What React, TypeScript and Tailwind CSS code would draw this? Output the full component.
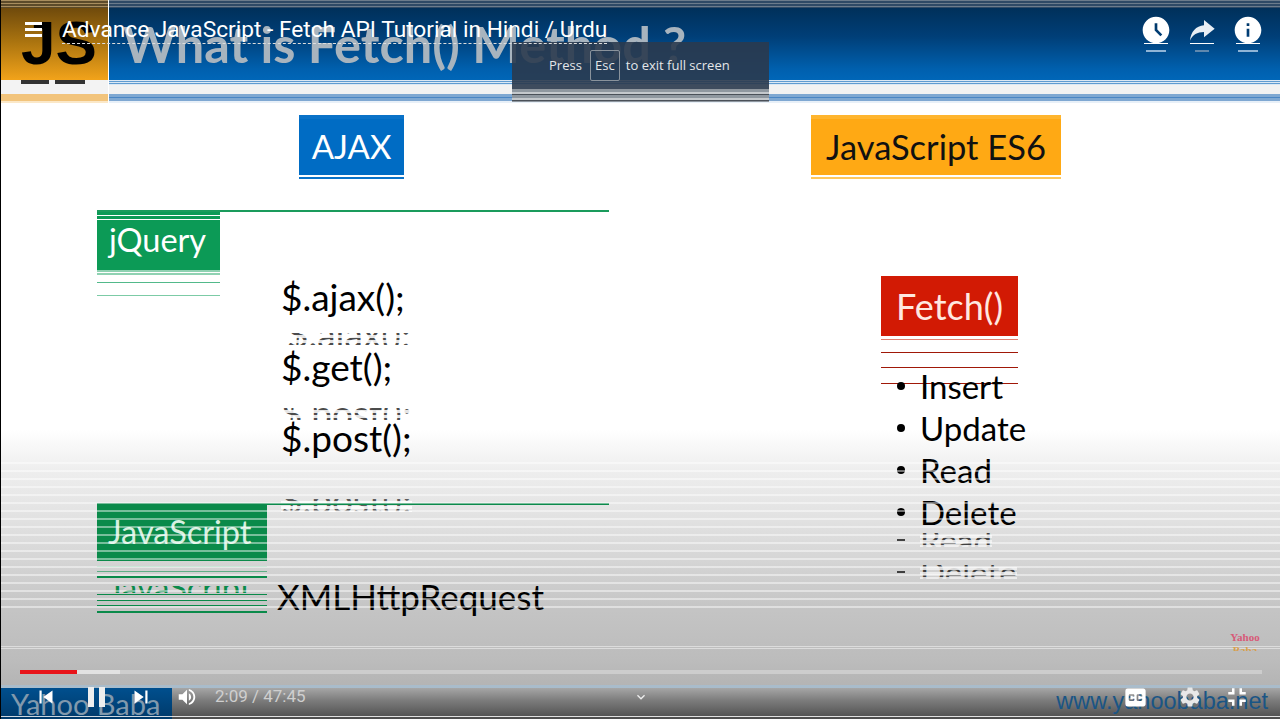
import React from "react";
import { MdAccessTimeFilled, MdInfo, MdSettings, MdFullscreenExit, MdSkipPrevious, MdSkipNext, MdVolumeUp, MdClosedCaption, MdKeyboardArrowDown } from "react-icons/md";

const slide = "font-['Lato','Open_Sans',sans-serif]";

function Slice({ text, h, top, className }: { text: string; h: number; top: number; className: string }) {
  return (
    <div className="relative overflow-hidden whitespace-nowrap" style={{ height: h }}>
      <div className={className} style={{ marginTop: -top }}>{text}</div>
      <div className="absolute inset-0 bg-[repeating-linear-gradient(to_bottom,transparent_0,transparent_2px,rgba(255,255,255,0.85)_2px,rgba(255,255,255,0.85)_5px)]" />
    </div>
  );
}

function TopIcon({ children, dash }: { children: React.ReactNode; dash: string }) {
  return (
    <div className="flex flex-col items-center w-[30px]">
      {children}
      <div className="w-[24px] h-px bg-white -mt-[3px]" />
      <div className={`h-[2px] mt-[6px] ${dash}`} />
    </div>
  );
}

const listText = "text-[37px] leading-[38px] text-black";

export default function App() {
  return (
    <div className="relative w-[1280px] h-[719px] overflow-hidden bg-[linear-gradient(to_bottom,#fff_0,#fff_430px,#eee_470px,#dcdcdc_540px,#c4c4c4_610px,#bcbcbc_660px,#b4b4b4_686px)] border-l border-black">
      {/* slide header band */}
      <div className="flex h-[103px]">
        <div className="w-[107px] flex flex-col shrink-0">
          <div className="h-[8px] bg-[repeating-linear-gradient(to_bottom,#a98d5e_0,#a98d5e_1px,#5c4a2a_1px,#5c4a2a_3px)]" />
          <div className="h-[72px] bg-[linear-gradient(to_bottom,#6f4a0c,#a8720f_45%,#f2a31a)] overflow-hidden">
            <div className="font-['Liberation_Sans',sans-serif] font-bold text-[62px] leading-[60px] text-black ml-[20px] mt-[5px]">JS</div>
          </div>
          <div className="h-[7px] bg-[#f3f3f3] overflow-hidden">
            <div className="flex gap-[6px] ml-[20px]"><div className="w-[28px] h-[4px] bg-[#333]" /><div className="w-[30px] h-[4px] bg-[#333]" /></div>
          </div>
          <div className="h-[7px] bg-[#f3f3f3]" />
          <div className="h-[7px] bg-[#f2c47c]" />
          <div className="h-[2px] bg-[#fbe8c8]" />
        </div>
        <div className="w-px bg-white shrink-0" />
        <div className="flex-1 flex flex-col">
          <div className="h-[8px] bg-[repeating-linear-gradient(to_bottom,#6b7c8c_0,#6b7c8c_1px,#2e4a66_1px,#2e4a66_3px)]" />
          <div className="h-[72px] bg-[linear-gradient(to_bottom,#00305a,#003f78_40%,#0060ae_85%,#0066b8)] overflow-hidden">
            <div className={`${slide} text-[50.5px] leading-[60px] font-bold text-[#a8b4be] whitespace-nowrap ml-[14px] mt-[6px]`}>What is Fetch() Method ?</div>
          </div>
          <div className="h-[5px] bg-[repeating-linear-gradient(to_bottom,#dbe8f4_0,#dbe8f4_1px,#5f9bd0_1px,#5f9bd0_2px)]" />
          <div className="h-[9px] bg-[#f2f2f2]" />
          <div className="h-[7px] bg-[repeating-linear-gradient(to_bottom,#7fa8d2_0,#7fa8d2_3px,#4a86c4_3px,#4a86c4_4px)]" />
          <div className="h-[2px] bg-[#e8f0f8]" />
        </div>
      </div>

      {/* slide body */}
      <div className={`${slide} flex mt-[12px]`}>
        <div className="w-[512px] ml-[96px] shrink-0">
          <div className="ml-[202px] w-[105px] h-[62px] bg-[#006cc4] flex items-center justify-center border-t-[4px] border-b-2 border-b-white border-t-[#0a72c8] text-white text-[33px] shadow-[0_2px_0_#0a72c8]">AJAX</div>

          <div className="mt-[33px] h-[293px] border-t-2 border-[#1a9b5c] flex">
            <div className="w-[123px] shrink-0">
              <div className="h-[58px] text-white text-[32.5px] leading-[34px] pt-[11px] pl-[12px] overflow-hidden bg-[linear-gradient(to_bottom,#0c9a56_0,#0c9a56_3px,#fff_3px,#fff_4px,#0c9a56_4px,#0c9a56_7px,#fff_7px,#fff_8px,#0c9a56_8px)]">jQuery</div>
              <div className="h-[2px] bg-[#8fd2b2]" />
              <div className="h-[2px] mt-[1px] bg-[#8fd2b2]" />
              <div className="h-px mt-[7px] bg-[#52b98a]" />
              <div className="h-px mt-[12px] bg-[#7ccba6]" />
            </div>
            <div className="ml-[61px] flex flex-col">
              <div className={`${listText} mt-[66px]`}>$.ajax();</div>
              <div className="mt-[17px]"><Slice text="$.ajax();" h={12} top={18} className={`${listText} opacity-70 ml-[6px]`} /></div>
              <div className={`${listText} mt-[3px]`}>$.get();</div>
              <div className="mt-[22px]"><Slice text="$.post();" h={12} top={14} className={`${listText} opacity-70`} /></div>
              <div className={`${listText} -mt-[1px]`}>$.post();</div>
              <div className="mt-[42px]">
                <Slice text="$.post();" h={13} top={18} className={`${listText} opacity-60`} />
              </div>
            </div>
          </div>

          <div className="border-t-2 border-[#0c8a4c] flex relative">
            <div className="w-[170px] shrink-0">
              <div className="h-[56px] bg-[#0a8a4a] text-[#d6f0e0] text-[32.5px] leading-[36px] pt-[9px] pl-[11px] overflow-hidden whitespace-nowrap">JavaScript</div>
              <div className="h-px mt-[5px] bg-[#9ed4b8]" />
              <div className="h-px mt-[4px] bg-[#5fae86]" />
              <div className="h-[2px] mt-[4px] bg-[#0a8a4a]" />
              <div className="h-[7px] mt-[8px] overflow-hidden">
                <div className="text-[#0a8a4a] text-[32.5px] leading-[20px] pl-[11px] -mt-[8px] whitespace-nowrap">JavaScript</div>
              </div>
              <div className="h-px mt-[1px] bg-[#0a8a4a]" />
              <div className="h-px mt-[5px] bg-[#0a8a4a]" />
              <div className="h-px mt-[4px] bg-[#0a8a4a]" />
              <div className="h-[2px] mt-[5px] bg-[#0a8a4a]" />
            </div>
            <div className="text-[35px] leading-[40px] text-black ml-[10px] mt-[71px]">XMLHttpRequest</div>
          </div>
        </div>

        <div className="ml-[202px] flex flex-col">
          <div className="w-[250px] h-[62px] bg-[#ffa914] border-t-[4px] border-b-2 border-[#ffb52e] border-b-white flex items-center justify-center text-[#111] text-[34.5px] shadow-[0_2px_0_#ffc75c]">JavaScript ES6</div>
          <div className="ml-[70px] mt-[99px] w-[137px]">
            <div className="h-[60px] bg-[#d21a04] text-[#ffe8e0] text-[36px] leading-[40px] pt-[10px] text-center">Fetch()</div>
            <div className="h-px mt-[3px] bg-[#e08070]" />
            <div className="h-px mt-[12px] bg-[#a01808]" />
            <div className="h-px mt-[14px] bg-[#a01808]" />
            <div className="h-px mt-[15px] bg-[#a01808]" />
          </div>
          <ul className="ml-[86px] -mt-[19px] text-[33px] leading-[42px] text-black">
            {["Insert", "Update", "Read", "Delete"].map((t) => (
              <li key={t} className="flex items-center gap-[15px]">
                <span className="w-[8px] h-[8px] rounded-full bg-black" />
                <span>{t}</span>
              </li>
            ))}
            <li className="flex items-center gap-[15px] h-[14px] opacity-70 overflow-hidden">
              <span className="w-[8px] h-[2px] bg-black" />
              <Slice text="Read" h={14} top={14} className="leading-[42px]" />
            </li>
            <li className="flex items-center gap-[15px] h-[14px] mt-[18px] opacity-70 overflow-hidden">
              <span className="w-[8px] h-[2px] bg-black" />
              <Slice text="Delete" h={14} top={14} className="leading-[42px]" />
            </li>
          </ul>
        </div>
      </div>

      {/* scan-line glitch over the lower half of the frame */}
      <div className="absolute left-0 right-0 top-[458px] h-[150px] pointer-events-none bg-[repeating-linear-gradient(to_bottom,transparent_0,transparent_4px,rgba(255,255,255,0.45)_4px,rgba(255,255,255,0.45)_6px,transparent_6px,transparent_8px)]" />
      <div className="absolute left-0 right-0 top-[646px] h-[3px] pointer-events-none border-y border-[#dcdcdc]" />

      {/* burned-in logo */}
      <div className="absolute left-[1228px] top-[631px] w-[32px] text-center font-['Liberation_Serif',serif] font-bold text-[11px] leading-[12px]">
        <div className="text-[#d85a78]">Yahoo</div>
        <div className="text-[#d8a04c] mt-[1px] h-[7px] overflow-hidden">Baba</div>
      </div>

      {/* fullscreen hint */}
      <div className="absolute left-[511px] top-[42px] w-[257px]">
        <div className="h-[47px] bg-[#2a3a4ee6] flex items-center pl-[37px] font-['Open_Sans',sans-serif] text-[13px] text-[#e4e6e8]">
          <span>Press</span>
          <span className="ml-[8px] w-[30px] h-[31px] border border-[#8a939c] rounded-[2px] flex items-center justify-center">Esc</span>
          <span className="ml-[6px]">to exit full screen</span>
        </div>
        <div className="h-[13px] bg-[repeating-linear-gradient(to_bottom,#8f979f_0,#8f979f_3px,#c4c8cc_3px,#c4c8cc_5px,#4a5058_5px,#4a5058_6px)]" />
      </div>

      {/* player top chrome */}
      <div className="absolute left-[24px] right-[17px] top-[14px] flex items-start font-['Roboto',sans-serif]">
        <div className="w-[17px] mt-[8px] flex flex-col gap-[3px]">
          <div className="h-[3px] bg-white" /><div className="h-[3px] bg-white" /><div className="h-[3px] bg-white" />
        </div>
        <div className="ml-[20px] mt-[3px] border-b border-dashed border-[#ddd] text-white text-[22.7px] leading-[26px] whitespace-nowrap">Advance JavaScript - Fetch API Tutorial in Hindi / Urdu</div>
        <div className="ml-auto flex gap-[16px] text-white">
          <TopIcon dash="w-[20px] bg-[#8fb4d6]"><MdAccessTimeFilled size={32} /></TopIcon>
          <TopIcon dash="w-[14px] bg-[#5f88ae]">
            <svg viewBox="0 0 24 24" width={32} height={32} fill="#e8eef4"><path d="M13.500 4.500l8 6.500-8 6.500v-4C8.500 13.500 5 15.500 3 20 3.500 13.500 7.500 9 13.500 8.500z" /></svg>
          </TopIcon>
          <TopIcon dash="w-[20px] bg-[#8fb4d6]"><MdInfo size={32} /></TopIcon>
        </div>
      </div>

      {/* progress */}
      <div className="absolute left-[19px] right-[18px] top-[670px] h-[4px] flex bg-[#cdcdcd]">
        <div className="w-[57px] bg-[#e8141a]" />
        <div className="w-[43px] bg-[#e2e2e2]" />
      </div>

      {/* player controls */}
      <div className="absolute left-0 right-0 bottom-0 h-[34px] flex border-t-[3px] border-[#a9bccb] font-['Roboto',sans-serif]">
        <div className="w-[171px] bg-[linear-gradient(to_bottom,#004f8e,#003a6a)] relative overflow-hidden shrink-0">
          <div className={`${slide} absolute left-[10px] top-[-1px] text-[29px] leading-[34px] text-[#8199ad] whitespace-nowrap`}>Yahoo Baba</div>
          <div className="absolute bottom-[2px] left-0 right-0 h-px bg-[#cfd8e0]" />
        </div>
        <div className="flex-1 bg-[linear-gradient(to_bottom,#a6a6a6,#7c7c7c_40%,#4c4c4c)] relative overflow-hidden">
          <div className="absolute right-[12px] top-[-3px] font-['Liberation_Sans',sans-serif] text-[23.5px] leading-[32px] text-[#1a5585] whitespace-nowrap">www.yahoobaba.net</div>
          <div className="absolute bottom-[2px] left-0 right-0 h-px bg-[#e0e0e0]" />
        </div>
        <div className="absolute left-[32px] top-0 right-[28px] h-[18px] flex items-center text-white">
          <MdSkipPrevious size={26} className="shrink-0" />
          <div className="flex gap-[5px] ml-[29px]"><div className="w-[6px] h-[20px] bg-[#eeeeee]" /><div className="w-[6px] h-[20px] bg-[#eeeeee]" /></div>
          <MdSkipNext size={26} className="ml-[23px] shrink-0" />
          <MdVolumeUp size={22} className="ml-[22px] shrink-0" />
          <span className="ml-[17px] text-[17px] text-[#cfcfcf] whitespace-nowrap">2:09 / 47:45</span>
          <MdKeyboardArrowDown size={16} className="ml-[327px] text-[#eee] shrink-0" />
          <MdClosedCaption size={27} className="ml-auto shrink-0" />
          <MdSettings size={24} className="ml-[29px] text-[#e8e8e8] shrink-0" />
          <MdFullscreenExit size={30} className="ml-[20px] shrink-0" />
        </div>
      </div>
    </div>
  );
}
